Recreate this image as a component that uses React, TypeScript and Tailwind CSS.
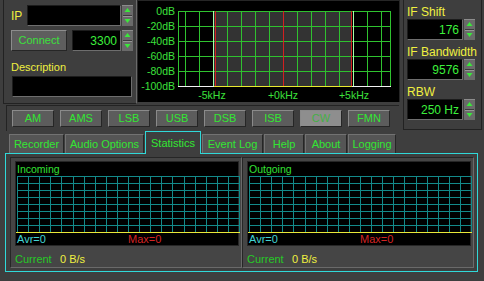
import React from "react";

const modes = ["AM", "AMS", "LSB", "USB", "DSB", "ISB", "CW", "FMN"];

const tabs = [
  { label: "Recorder", w: "w-[55px]" },
  { label: "Audio Options", w: "w-[79px]" },
  { label: "Statistics", w: "w-[56px]" },
  { label: "Event Log", w: "w-[61px]" },
  { label: "Help", w: "w-[40px]" },
  { label: "About", w: "w-[42px]" },
  { label: "Logging", w: "w-[48px]" },
];

const Spinner = () => (
  <svg width="11" height="21" className="block shrink-0">
    <rect x="0" y="0" width="11" height="21" fill="#6a6a6a" />
    <rect x="0" y="0" width="11" height="1" fill="#8c8c8c" />
    <path d="M2.5 7 L5.5 3 L8.5 7 Z" fill="#3be83b" />
    <rect x="1" y="10" width="9" height="1" fill="#3a3a3a" />
    <rect x="1" y="11" width="9" height="1" fill="#959595" />
    <path d="M2.5 14 L8.5 14 L5.5 18 Z" fill="#3be83b" />
  </svg>
);

const Field = ({ value, w }: { value?: string; w: string }) => (
  <div
    className={`${w} flex h-[21px] items-center justify-end border border-t-[#1c1c1c] border-l-[#1c1c1c] border-b-[#6e6e6e] border-r-[#6e6e6e] bg-black pr-[3px] text-[12px] text-[#3cf03c]`}
  >
    {value}
  </div>
);

const Spectrum = () => {
  const cols = [];
  for (let k = -7; k <= 7; k++) cols.push(145 + k * 14);
  const rows = [10, 25, 40, 55, 70, 85];
  const db = ["0dB", "-20dB", "-40dB", "-60dB", "-80dB", "-100dB"];
  return (
    <svg width="261" height="101" className="block" shapeRendering="crispEdges">
      <rect x="0" y="0" width="261" height="101" fill="#000" />
      <rect x="76" y="10" width="138" height="75" fill="#333333" />
      {cols.map((x) => (
        <line key={x} x1={x + 0.5} y1="10" x2={x + 0.5} y2="85" stroke="#2fc22f" />
      ))}
      <line x1="40.5" y1="10" x2="40.5" y2="85" stroke="#2fc22f" />
      <line x1="252.5" y1="10" x2="252.5" y2="85" stroke="#2fc22f" />
      {rows.map((y) => (
        <line key={y} x1="40" y1={y + 0.5} x2="253" y2={y + 0.5} stroke="#2fc22f" />
      ))}
      <line x1="40" y1="85.5" x2="253" y2="85.5" stroke="#f2f2f2" />
      <line x1="76" y1="85.5" x2="214" y2="85.5" stroke="#e8e830" />
      <line x1="75.5" y1="10" x2="75.5" y2="85" stroke="#a8ffa8" />
      <line x1="215.5" y1="10" x2="215.5" y2="85" stroke="#a8ffa8" />
      <line x1="77.5" y1="10" x2="77.5" y2="85" stroke="#d22020" />
      <line x1="145.5" y1="10" x2="145.5" y2="85" stroke="#d22020" />
      <line x1="213.5" y1="10" x2="213.5" y2="85" stroke="#d22020" />
      {rows.map((y, i) => (
        <text
          key={y}
          x="37"
          y={y + 4}
          textAnchor="end"
          fontSize="10.5"
          fill="#3ce03c"
          fontFamily="Liberation Sans, Arial, sans-serif"
        >
          {db[i]}
        </text>
      ))}
      {[
        ["-5kHz", 74],
        ["+0kHz", 145],
        ["+5kHz", 216],
      ].map(([t, x]) => (
        <text
          key={t}
          x={x}
          y="98"
          textAnchor="middle"
          fontSize="10.5"
          fill="#3ce03c"
          fontFamily="Liberation Sans, Arial, sans-serif"
        >
          {t}
        </text>
      ))}
    </svg>
  );
};

const Graph = () => {
  const v = [];
  for (let i = 0; i <= 20; i++) v.push(Math.round(i * 11.1));
  const h = [];
  for (let j = 0; j <= 8; j++) h.push(j * 7);
  return (
    <svg width="224" height="57" className="block" shapeRendering="crispEdges">
      {v.map((x) => (
        <line key={x} x1={x + 1.5} y1="0" x2={x + 1.5} y2="57" stroke="#138a8a" />
      ))}
      {h.map((y) => (
        <line key={y} x1="1" y1={y + 0.5} x2="224" y2={y + 0.5} stroke="#138a8a" />
      ))}
      <line x1="0" y1="56.5" x2="224" y2="56.5" stroke="#e8e838" />
    </svg>
  );
};

const Group = ({ title }: { title: string }) => (
  <div className="h-[111px] w-[232px] border border-t-[#262626] border-l-[#262626] border-b-[#6a6a6a] border-r-[#6a6a6a] bg-[#454545] pl-[4px] pt-[3px]">
    <div className="h-[85px] w-[224px] border border-[#262626] bg-black">
      <div className="h-[14px] pl-[1px] text-[10.5px] leading-[14px] text-[#33e033]">{title}</div>
      <Graph />
      <div className="flex h-[12px] text-[11px] leading-[12px]">
        <span className="w-[112px] pl-[1px] text-[#42d4d4]">Avr=0</span>
        <span className="text-[#d42424]">Max=0</span>
      </div>
    </div>
    <div className="mt-[6px] flex h-[14px] items-center text-[11px]">
      <span className="w-[45px] text-[#27c827]">Current</span>
      <span className="text-[#f0f040]">0 B/s</span>
    </div>
  </div>
);

export default function App() {
  return (
    <div className="h-[281px] w-[484px] overflow-hidden bg-[#3e3e3e] text-[11px] [font-family:'Liberation_Sans',Arial,sans-serif]">
      <div className="flex h-[131px]">
        <div className="flex w-[402px] flex-col">
          <div className="flex h-[104px]">
            {/* connection panel */}
            <div className="ml-[3px] h-[104px] w-[134px] border-x border-b border-l-[#222] border-r-[#6a6a6a] border-b-[#222] pl-[7px]">
              <div className="mt-[5px] flex items-center">
                <span className="w-[16px] text-[12px] text-[#f0f040]">IP</span>
                <Field w="w-[94px]" />
                <div className="ml-[1px]">
                  <Spinner />
                </div>
              </div>
              <div className="mt-[4px] flex items-center">
                <button className="h-[21px] w-[56px] border border-t-[#8c8c8c] border-l-[#8c8c8c] border-b-[#262626] border-r-[#262626] bg-[#5e5e5e] text-[11px] text-[#3ce03c]">
                  Connect
                </button>
                <div className="ml-[5px]">
                  <Field w="w-[49px]" value="3300" />
                </div>
                <div className="ml-[1px]">
                  <Spinner />
                </div>
              </div>
              <div className="mt-[9px] h-[14px] text-[11px] leading-[14px] text-[#f0f040]">Description</div>
              <div className="mt-[2px] ml-[1px]">
                <Field w="w-[120px]" />
              </div>
            </div>
            {/* spectrum */}
            <div className="h-[102px] border border-[#262626]">
              <Spectrum />
            </div>
          </div>
          {/* mode buttons */}
          <div className="ml-[6px] mt-[1px] flex h-[26px] w-[393px] items-start gap-[6px] border-l border-t border-[#232323] pl-[5px] pt-[4px]">
            {modes.map((m) => (
              <button
                key={m}
                className={`h-[17px] w-[42px] border border-t-[#8a8a8a] border-l-[#8a8a8a] border-b-[#262626] border-r-[#262626] text-[11px] leading-[15px] ${
                  m === "CW" ? "bg-[#8e8e8e] text-[#45b045]" : "bg-[#5c5c5c] text-[#33e633]"
                }`}
              >
                {m}
              </button>
            ))}
          </div>
        </div>
        {/* IF panel */}
        <div className="ml-[1px] h-[130px] w-[79px] border-l border-b border-r border-[#222] pl-[3px]">
          <div className="mt-[5px] h-[14px] text-[12px] leading-[14px] text-[#f0f040]">IF Shift</div>
          <div className="flex">
            <Field w="w-[56px]" value="176" />
            <div className="ml-[1px]">
              <Spinner />
            </div>
          </div>
          <div className="mt-[5px] h-[14px] text-[12px] leading-[14px] text-[#f0f040]">IF Bandwidth</div>
          <div className="flex">
            <Field w="w-[56px]" value="9576" />
            <div className="ml-[1px]">
              <Spinner />
            </div>
          </div>
          <div className="mt-[5px] h-[14px] text-[12px] leading-[14px] text-[#f0f040]">RBW</div>
          <div className="flex">
            <Field w="w-[56px]" value="250 Hz" />
            <div className="ml-[1px]">
              <Spinner />
            </div>
          </div>
        </div>
      </div>
      {/* tabs */}
      <div className="flex h-[22px] items-end gap-[1px] pl-[9px]">
        {tabs.map((t) =>
          t.label === "Statistics" ? (
            <div
              key={t.label}
              className={`${t.w} relative z-10 -mb-[1px] flex h-[23px] items-center justify-center border-x border-t border-[#30d8d8] bg-[#3e3e3e] text-[11px] text-[#33e633]`}
            >
              {t.label}
            </div>
          ) : (
            <div
              key={t.label}
              className={`${t.w} flex h-[19px] items-center justify-center border border-t-[#727272] border-l-[#727272] border-r-[#262626] border-b-0 bg-[#555] text-[11px] text-[#33e633]`}
            >
              {t.label}
            </div>
          )
        )}
      </div>
      {/* content */}
      <div className="ml-[5px] flex h-[119px] w-[473px] border border-[#30d8d8] pl-[4px] pt-[3px]">
        <Group title="Incoming" />
        <Group title="Outgoing" />
      </div>
    </div>
  );
}
